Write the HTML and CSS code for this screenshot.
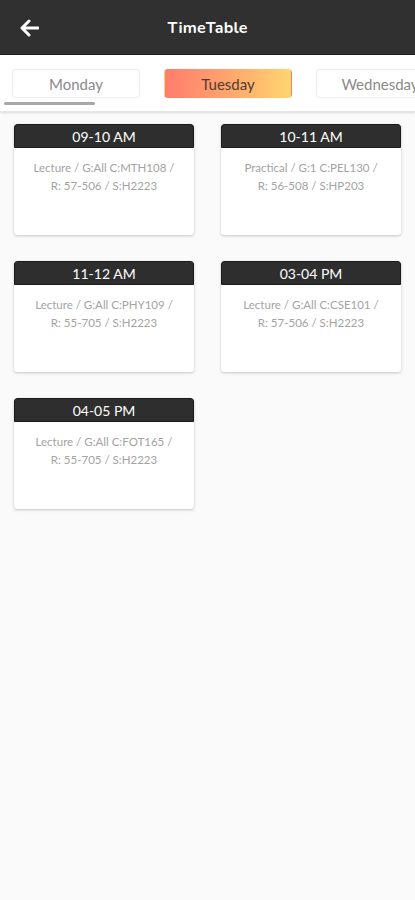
FILE: index.html
```html
<!DOCTYPE html>
<html>
<head>
<meta charset="utf-8">
<link rel="stylesheet" href="styles.css">
</head>
<body>
<header class="appbar">
  <svg class="back" width="20" height="18" viewBox="0 0 20 18"><path d="M19 9H3M10 2L3 9l7 7" fill="none" stroke="#fff" stroke-width="3" stroke-linecap="round" stroke-linejoin="round"/></svg>
  <h1 class="title">TimeTable</h1>
</header>
<nav class="tabbar">
  <div class="tabs">
    <div class="tab">Monday</div>
    <div class="tab active">Tuesday</div>
    <div class="tab">Wednesday</div>
  </div>
  <div class="scroll"></div>
</nav>
<main class="grid">
  <div class="card"><div class="time">09-10 AM</div><p class="info">Lecture / G:All C:MTH108 /<br>R: 57-506 / S:H2223</p></div>
  <div class="card"><div class="time">10-11 AM</div><p class="info">Practical / G:1 C:PEL130 /<br>R: 56-508 / S:HP203</p></div>
  <div class="card"><div class="time">11-12 AM</div><p class="info">Lecture / G:All C:PHY109 /<br>R: 55-705 / S:H2223</p></div>
  <div class="card"><div class="time">03-04 PM</div><p class="info">Lecture / G:All C:CSE101 /<br>R: 57-506 / S:H2223</p></div>
  <div class="card"><div class="time">04-05 PM</div><p class="info">Lecture / G:All C:FOT165 /<br>R: 55-705 / S:H2223</p></div>
</main>
</body>
</html>
```
FILE: styles.css
```css
* { box-sizing: border-box; }
html, body { margin: 0; padding: 0; }
body {
  width: 415px;
  height: 900px;
  background: #fafafa;
  font-family: "Lato", "Noto Sans", sans-serif;
  overflow: hidden;
}
.appbar {
  height: 55px;
  background: #303030;
  display: flex;
  align-items: center;
  position: relative;
  border-bottom: 1px solid #1e1e1e;
}
.back { margin-left: 19px; margin-top: 2px; }
.title {
  position: absolute;
  left: 0; right: 0;
  top: 18px;
  margin: 0;
  text-align: center;
  color: #fff;
  font-family: "Nunito", "Lato", sans-serif;
  font-size: 16px;
  line-height: 20px;
  font-weight: 700;
  letter-spacing: 0.2px;
  pointer-events: none;
}
.tabbar {
  height: 57px;
  background: #fff;
  box-shadow: 0 1px 2px rgba(0,0,0,0.12);
  border-bottom: 1px solid #e6e6e6;
  padding-top: 14px;
  overflow: hidden;
}
.tabs {
  display: flex;
  gap: 24px;
  padding-left: 12px;
  white-space: nowrap;
}
.tab {
  flex: 0 0 128px;
  height: 29px;
  display: flex;
  align-items: center;
  justify-content: center;
  font-size: 15px;
  color: #8a8a8a;
  background: #fff;
  border: 1px solid #f0f0f0;
  border-radius: 4px;
  box-shadow: 0 0 2px rgba(0,0,0,0.06);
}
.tab.active {
  background: linear-gradient(90deg, #ff7d6d, #ffa56e 50%, #ffd56f);
  border-color: transparent;
  color: #4e3e30;
}
.scroll {
  width: 91px;
  height: 3px;
  margin: 4px 0 0 4px;
  background: #a8a8a8;
  border-radius: 2px;
}
.grid {
  display: grid;
  grid-template-columns: 180px 180px;
  column-gap: 27px;
  row-gap: 26px;
  padding: 12px 0 0 14px;
}
.card {
  height: 111px;
  background: #fff;
  border-radius: 3px;
  box-shadow: 0 1px 3px rgba(0,0,0,0.22);
  overflow: hidden;
}
.time {
  height: 24px;
  background: #2e2e2e;
  color: #fff;
  font-size: 14px;
  text-align: center;
  line-height: 23px;
  border: 1px solid #1a1a1a;
  border-radius: 3px 3px 0 0;
}
.info {
  margin: 0;
  padding-top: 11px;
  text-align: center;
  font-size: 11.5px;
  line-height: 18px;
  color: #a3a3a3;
}
```
